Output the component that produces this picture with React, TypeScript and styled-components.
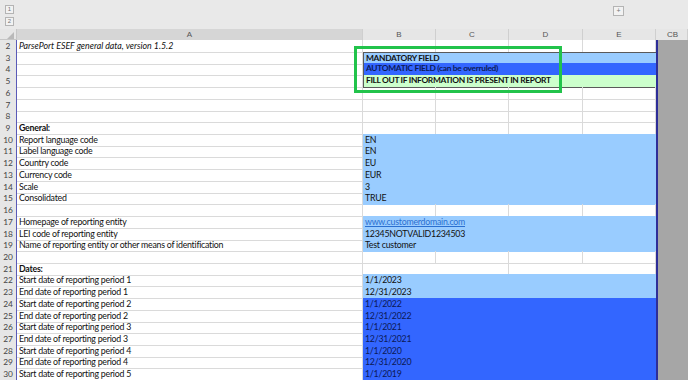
import styled, { createGlobalStyle } from "styled-components";

const GlobalStyle = createGlobalStyle`
  html, body {
    margin: 0;
    padding: 0;
    background: #e9e9e9;
  }
  body {
    font-family: Lato, "Liberation Sans", sans-serif;
  }
`;

const COLS = "17px 346px 73px 73px 74px 73px 2px 30px";
const ROW_H = "11.73px";

const FILLS: Record<string, string> = {
  light: "#99ccff",
  dark: "#3366ff",
  green: "#ccffcc",
};

const Sheet = styled.div`
  position: relative;
  width: 688px;
  height: 380px;
  overflow: hidden;
  background: #e9e9e9;
  display: flex;
  flex-direction: column;
`;

const Toolbar = styled.div`
  height: 29px;
  display: flex;
  justify-content: space-between;
  align-items: flex-start;
  padding: 5px 64px 0 5px;
  box-sizing: border-box;
`;

const LevelButtons = styled.div`
  display: flex;
  flex-direction: column;
  gap: 3px;
`;

const SmallBtn = styled.div`
  width: 9px;
  height: 9px;
  box-sizing: border-box;
  border: 1px solid #b4b4b4;
  background: #f2f2f2;
  color: #777;
  font-size: 6px;
  line-height: 7px;
  text-align: center;
  font-family: "Liberation Sans", sans-serif;
`;

const PlusBtn = styled(SmallBtn)`
  width: 11px;
  height: 10px;
  margin-top: 1px;
  font-size: 7px;
  line-height: 8px;
`;

const HeaderRow = styled.div`
  display: grid;
  grid-template-columns: ${COLS};
  height: 10px;
  background: #e6e6e6;
  border-bottom: 1px solid #c6c6c6;
  box-sizing: content-box;
`;

const Corner = styled.div`
  position: relative;
  border-right: 1px solid #c6c6c6;
  &::after {
    content: "";
    position: absolute;
    right: 2px;
    bottom: 1px;
    border-left: 7px solid transparent;
    border-bottom: 7px solid #b9b9b9;
  }
`;

const ColHead = styled.div<{ $selected?: boolean }>`
  border-right: 1px solid #cfcfcf;
  background: ${(p) => (p.$selected ? "#d6d6d6" : "#e6e6e6")};
  color: #555;
  font-size: 8px;
  line-height: 11px;
  text-align: center;
  font-family: "Liberation Sans", sans-serif;
`;

const HeadGap = styled.div`
  background: #e6e6e6;
`;

const Body = styled.div`
  display: flex;
  flex-direction: column;
  background: #fff;
`;

const Row = styled.div`
  display: grid;
  grid-template-columns: ${COLS};
  height: ${ROW_H};
  font-size: 8.8px;
  letter-spacing: -0.25px;
  line-height: 12px;
  color: #111;
`;

const RowNum = styled.div`
  background: #e6e6e6;
  color: #444;
  text-align: center;
  border-bottom: 1px solid #d2d2d2;
  border-right: 1px solid #5a5ab8;
  box-sizing: border-box;
  font-size: 8.4px;
  letter-spacing: 0;
`;

const Cell = styled.div<{ $bold?: boolean; $italic?: boolean; $span?: number }>`
  grid-column: span ${(p) => p.$span ?? 1};
  border-bottom: 1px solid #dadada;
  border-right: 1px solid #dadada;
  box-sizing: border-box;
  padding-left: 2px;
  white-space: nowrap;
  overflow: visible;
  font-weight: ${(p) => (p.$bold ? 700 : 400)};
  font-style: ${(p) => (p.$italic ? "italic" : "normal")};
  letter-spacing: ${(p) => (p.$italic ? "0" : "inherit")};
`;

const FillCell = styled.div<{ $fill: string; $legend?: "top" | "mid" | "bottom" }>`
  grid-column: span 4;
  background: ${(p) => FILLS[p.$fill]};
  color: ${(p) => (p.$fill === "dark" ? "#0c1a57" : "#111")};
  font-weight: ${(p) => (p.$legend ? 700 : 400)};
  font-size: ${(p) => (p.$legend ? "8.4px" : "inherit")};
  letter-spacing: ${(p) => (p.$legend ? "-0.32px" : "inherit")};
  padding-left: 2px;
  box-sizing: border-box;
  white-space: nowrap;
  border-left: ${(p) => (p.$legend ? "1px solid #5a5a5a" : "none")};
  border-top: ${(p) => (p.$legend === "top" ? "1px solid #5a5a5a" : "none")};
  border-bottom: ${(p) => (p.$legend === "bottom" ? "1px solid #5a5a5a" : "none")};
  line-height: ${(p) => (p.$legend ? "11px" : "12px")};
`;

const Link = styled.span`
  color: #2a6fd0;
  text-decoration: underline;
`;

const Divider = styled.div`
  background: #2e2e98;
`;

const Gray = styled.div`
  background: #a6a6a6;
`;

const Highlight = styled.div`
  position: absolute;
  left: 354px;
  top: 46px;
  width: 208px;
  height: 47px;
  border: 3px solid #22c34b;
  box-sizing: border-box;
  pointer-events: none;
`;

type RowData = {
  n: number;
  a?: string;
  bold?: boolean;
  italic?: boolean;
  fill?: "light" | "dark" | "green";
  b?: string;
  link?: boolean;
  legend?: "top" | "mid" | "bottom";
  pairs?: boolean;
};

const rows: RowData[] = [
  { n: 2, a: "ParsePort ESEF general data, version 1.5.2", italic: true },
  { n: 3, fill: "light", b: "MANDATORY FIELD", legend: "top" },
  { n: 4, fill: "dark", b: "AUTOMATIC FIELD (can be overruled)", legend: "mid" },
  { n: 5, fill: "green", b: "FILL OUT IF INFORMATION IS PRESENT IN REPORT", legend: "bottom" },
  { n: 6 },
  { n: 7 },
  { n: 8 },
  { n: 9, a: "General:", bold: true },
  { n: 10, a: "Report language code", fill: "light", b: "EN" },
  { n: 11, a: "Label language code", fill: "light", b: "EN" },
  { n: 12, a: "Country code", fill: "light", b: "EU" },
  { n: 13, a: "Currency code", fill: "light", b: "EUR" },
  { n: 14, a: "Scale", fill: "light", b: "3" },
  { n: 15, a: "Consolidated", fill: "light", b: "TRUE" },
  { n: 16 },
  { n: 17, a: "Homepage of reporting entity", fill: "light", b: "www.customerdomain.com", link: true },
  { n: 18, a: "LEI code of reporting entity", fill: "light", b: "12345NOTVALID1234503" },
  { n: 19, a: "Name of reporting entity or other means of identification", fill: "light", b: "Test customer" },
  { n: 20 },
  { n: 21, a: "Dates:", bold: true, pairs: true },
  { n: 22, a: "Start date of reporting period 1", fill: "light", b: "1/1/2023" },
  { n: 23, a: "End date of reporting period 1", fill: "light", b: "12/31/2023" },
  { n: 24, a: "Start date of reporting period 2", fill: "dark", b: "1/1/2022" },
  { n: 25, a: "End date of reporting period 2", fill: "dark", b: "12/31/2022" },
  { n: 26, a: "Start date of reporting period 3", fill: "dark", b: "1/1/2021" },
  { n: 27, a: "End date of reporting period 3", fill: "dark", b: "12/31/2021" },
  { n: 28, a: "Start date of reporting period 4", fill: "dark", b: "1/1/2020" },
  { n: 29, a: "End date of reporting period 4", fill: "dark", b: "12/31/2020" },
  { n: 30, a: "Start date of reporting period 5", fill: "dark", b: "1/1/2019" },
];

function SheetRow({ r }: { r: RowData }) {
  return (
    <Row>
      <RowNum>{r.n}</RowNum>
      <Cell $bold={r.bold} $italic={r.italic}>
        {r.a}
      </Cell>
      {r.fill ? (
        <FillCell $fill={r.fill} $legend={r.legend}>
          {r.link ? <Link>{r.b}</Link> : r.b}
        </FillCell>
      ) : r.pairs ? (
        <>
          <Cell $span={2} />
          <Cell $span={2} />
        </>
      ) : (
        <>
          <Cell />
          <Cell />
          <Cell />
          <Cell />
        </>
      )}
      <Divider />
      <Gray />
    </Row>
  );
}

export default function App() {
  return (
    <>
      <GlobalStyle />
      <Sheet>
        <Toolbar>
          <LevelButtons>
            <SmallBtn>1</SmallBtn>
            <SmallBtn>2</SmallBtn>
          </LevelButtons>
          <PlusBtn>+</PlusBtn>
        </Toolbar>
        <HeaderRow>
          <Corner />
          <ColHead $selected>A</ColHead>
          <ColHead>B</ColHead>
          <ColHead>C</ColHead>
          <ColHead>D</ColHead>
          <ColHead>E</ColHead>
          <HeadGap />
          <ColHead>CB</ColHead>
        </HeaderRow>
        <Body>
          {rows.map((r) => (
            <SheetRow key={r.n} r={r} />
          ))}
        </Body>
        <Highlight />
      </Sheet>
    </>
  );
}
